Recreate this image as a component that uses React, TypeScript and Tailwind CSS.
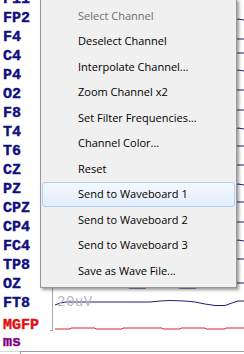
import React from "react";

const channels = [
  "F11", "FP2", "F4", "C4", "P4", "O2", "F8", "T4", "T6",
  "CZ", "PZ", "CPZ", "CP4", "FC4", "TP8", "OZ", "FT8",
];

const menuItems = [
  { label: "Select Channel", disabled: true },
  { label: "Deselect Channel" },
  { label: "Interpolate Channel..." },
  { label: "Zoom Channel x2" },
  { label: "Set Filter Frequencies..." },
  { label: "Channel Color..." },
  { label: "Reset" },
  { label: "Send to Waveboard 1", active: true },
  { label: "Send to Waveboard 2" },
  { label: "Send to Waveboard 3" },
  { label: "Save as Wave File..." },
];

// little bits of trace that peek out right of the menu
const traceYs = [20, 39, 53, 71, 90, 110, 129, 146, 165, 185, 202, 222, 241, 259];

function Waves() {
  return (
    <svg width="194" height="361" viewBox="50 -10 194 361" className="block">
      {traceYs.map((y, i) => (
        <polyline
          key={i}
          points={`60,${y} 236,${y} 238,${y - (i % 3 === 0 ? 1 : 0)} 244,${y}`}
          fill="none"
          stroke="#1c1c7a"
          strokeWidth="1"
        />
      ))}
      {/* OZ */}
      <polyline
        points="55,287 60,285 66,283 90,281 110,282 122,286 130,288 145,288 155,284 165,283 172,286 180,288 195,288 205,286 220,283 244,283"
        fill="none"
        stroke="#1c1c7a"
        strokeWidth="1"
      />
      {/* FT8 */}
      <polyline
        points="55,305 60,303 66,302 100,302 150,302 160,301 170,300.5 185,301 195,302 205,304 215,305.5 225,305.5 232,303 238,301 244,301"
        fill="none"
        stroke="#1c1c7a"
        strokeWidth="1"
      />
      {/* MGFP */}
      <polyline
        points="55,329 70,329 71,328 95,328 96,329 122,329 123,328 162,328 163,329 180,329 181,328 205,328 206,329 225,329 226,328 244,328"
        fill="none"
        stroke="#e02020"
        strokeWidth="1"
      />
      <line x1="52.5" y1="283" x2="52.5" y2="331" stroke="#a8a8a8" strokeWidth="1" />
      <line x1="50" y1="330.5" x2="53" y2="330.5" stroke="#a8a8a8" strokeWidth="1" />
      <text
        x="57"
        y="306"
        fill="#b8b8b8"
        fontSize="14"
        fontFamily="'Liberation Mono', monospace"
        letterSpacing="0.5"
      >
        20uV
      </text>
    </svg>
  );
}

export default function App() {
  return (
    <div className="relative w-[244px] h-[354px] overflow-hidden bg-white">
      <div className="flex -mt-[10px]">
        <div className="w-[50px] pl-[3px] flex flex-col font-bold text-[15px] font-['Liberation_Mono',monospace] [-webkit-text-stroke:0.4px]">
          {channels.map((c) => (
            <div key={c} className="h-[19px] leading-[19px] text-[#10107e]">
              {c}
            </div>
          ))}
          <div className="h-[19px] mt-[3px] leading-[19px] text-[#e01010]">MGFP</div>
          <div className="h-[16px] leading-[16px] text-[#800080]">ms</div>
        </div>
        <Waves />
      </div>
      <div className="flex h-[4px]">
        <div className="w-[20px] border-t border-[#d8d8d8]" />
        <div className="flex-1 border-t border-l border-[#9c9c9c] bg-white" />
      </div>

      <div className="absolute left-[40px] top-[-1px] w-[197px] py-[3px] bg-[#f0f0f0] border border-[#979797] shadow-[2px_2px_3px_rgba(0,0,0,0.4)] font-['Open_Sans',sans-serif] text-[11px]">
        {menuItems.map((item) => (
          <div
            key={item.label}
            className={
              item.active
                ? "mx-[1px] h-[25.5px] flex items-center pl-[35px] rounded-[3px] border border-[#aecff7] bg-gradient-to-b from-[#f3f8fd] to-[#e3eefb] text-black"
                : item.disabled
                ? "mx-[1px] h-[25.5px] flex items-center pl-[35px] border border-transparent text-[#6d6d6d]"
                : "mx-[1px] h-[25.5px] flex items-center pl-[35px] border border-transparent text-black"
            }
          >
            {item.label}
          </div>
        ))}
      </div>
    </div>
  );
}
